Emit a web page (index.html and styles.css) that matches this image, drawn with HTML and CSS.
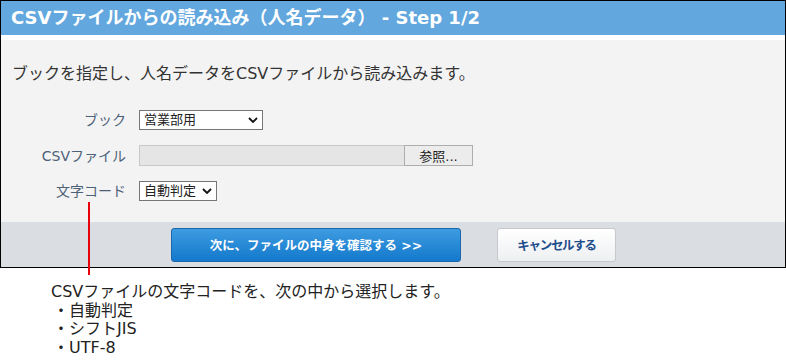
FILE: index.html
```html
<!DOCTYPE html>
<html lang="ja">
<head>
<meta charset="utf-8">
<title>CSVファイルからの読み込み</title>
<link rel="stylesheet" href="styles.css">
</head>
<body>
<div class="page">
  <div class="panel">
    <div class="header">CSVファイルからの読み込み（人名データ） - Step 1/2</div>
    <div class="content">
      <p class="desc">ブックを指定し、人名データをCSVファイルから読み込みます。</p>
      <div class="form">
        <div class="label">ブック</div>
        <div class="control">
          <div class="select select-book">
            <span class="select-text">営業部用</span>
            <svg class="chev" width="10" height="6" viewBox="0 0 10 6"><path d="M1 1 L5 5 L9 1" fill="none" stroke="#111" stroke-width="1.8"/></svg>
          </div>
        </div>
        <div class="label">CSVファイル</div>
        <div class="control file">
          <div class="file-box"></div>
          <div class="file-btn">参照...</div>
        </div>
        <div class="label">文字コード</div>
        <div class="control">
          <div class="select select-code">
            <span class="select-text">自動判定</span>
            <svg class="chev" width="10" height="6" viewBox="0 0 10 6"><path d="M1 1 L5 5 L9 1" fill="none" stroke="#111" stroke-width="1.8"/></svg>
          </div>
        </div>
      </div>
    </div>
    <div class="footer">
      <div class="btn btn-primary">次に、ファイルの中身を確認する &gt;&gt;</div>
      <div class="btn btn-cancel">キャンセルする</div>
    </div>
  </div>
  <div class="callout-line"></div>
  <div class="note">
    <div>CSVファイルの文字コードを、次の中から選択します。</div>
    <div class="item">・自動判定</div>
    <div class="item">・シフトJIS</div>
    <div class="item">・UTF-8</div>
  </div>
</div>
</body>
</html>
```

FILE: styles.css
```css
html, body {
  margin: 0;
  padding: 0;
  background: #fff;
}
body {
  font-family: "DejaVu Sans", "Noto Sans CJK JP", sans-serif;
  color: #333;
}
.page {
  position: relative;
  width: 786px;
  height: 364px;
}
.panel {
  border: 1px solid #000;
  display: flex;
  flex-direction: column;
}
.header {
  height: 34px;
  line-height: 34px;
  background: #62a7de;
  color: #fff;
  font-weight: bold;
  font-size: 18px;
  padding-left: 10px;
  border-bottom: 5px solid #fff;
  white-space: nowrap;
}
.content {
  background: #f3f3f3;
  padding: 24px 0 21px 0;
}
.desc {
  margin: 0 0 26px 11px;
  font-size: 16px;
  line-height: 20px;
  color: #333;
}
.form {
  display: grid;
  grid-template-columns: 126px auto;
  column-gap: 12px;
  row-gap: 15px;
  align-items: center;
}
.label {
  text-align: right;
  font-size: 14px;
  color: #4c6178;
  line-height: 20px;
  white-space: nowrap;
  padding-right: 1px;
}
.control {
  display: flex;
  align-items: center;
}
.select {
  box-sizing: border-box;
  height: 20px;
  background: #fff;
  border: 1px solid #767676;
  display: flex;
  align-items: center;
  justify-content: space-between;
  padding: 0 4px 0 4px;
  font-size: 13px;
  color: #222;
}
.select-book { width: 124px; }
.select-code { width: 78px; }
.select-text { line-height: 18px; }
.chev { display: block; }
.file-box {
  box-sizing: border-box;
  width: 265px;
  height: 21px;
  background: #e5e5e5;
  border: 1px solid #c8c8c8;
  border-right: none;
}
.file-btn {
  box-sizing: border-box;
  width: 69px;
  height: 21px;
  background: #ececec;
  border: 1px solid #adadad;
  font-size: 13px;
  color: #222;
  display: flex;
  align-items: center;
  justify-content: center;
}
.footer {
  height: 45px;
  background: #dadde2;
  display: flex;
  align-items: center;
  justify-content: center;
  gap: 36px;
  padding-left: 1px;
}
.btn {
  box-sizing: border-box;
  height: 34px;
  border-radius: 3px;
  display: flex;
  align-items: center;
  justify-content: center;
  font-weight: bold;
  font-size: 12.5px;
  white-space: nowrap;
}
.btn-primary {
  width: 290px;
  color: #fff;
  background: linear-gradient(#3d9be0, #1479cc);
  border: 1px solid #1a67aa;
}
.btn-cancel {
  width: 119px;
  color: #1f4e8c;
  letter-spacing: -1.3px;
  background: linear-gradient(#ffffff, #eeeff1);
  border: 1px solid #c5c8cc;
}
.callout-line {
  position: absolute;
  left: 88px;
  top: 202px;
  width: 2px;
  height: 73px;
  background: #e8000b;
}
.note {
  padding: 15px 0 0 51px;
  font-size: 16px;
  line-height: 18.5px;
  color: #222;
}
.item {
  padding-left: 2px;
}
```
